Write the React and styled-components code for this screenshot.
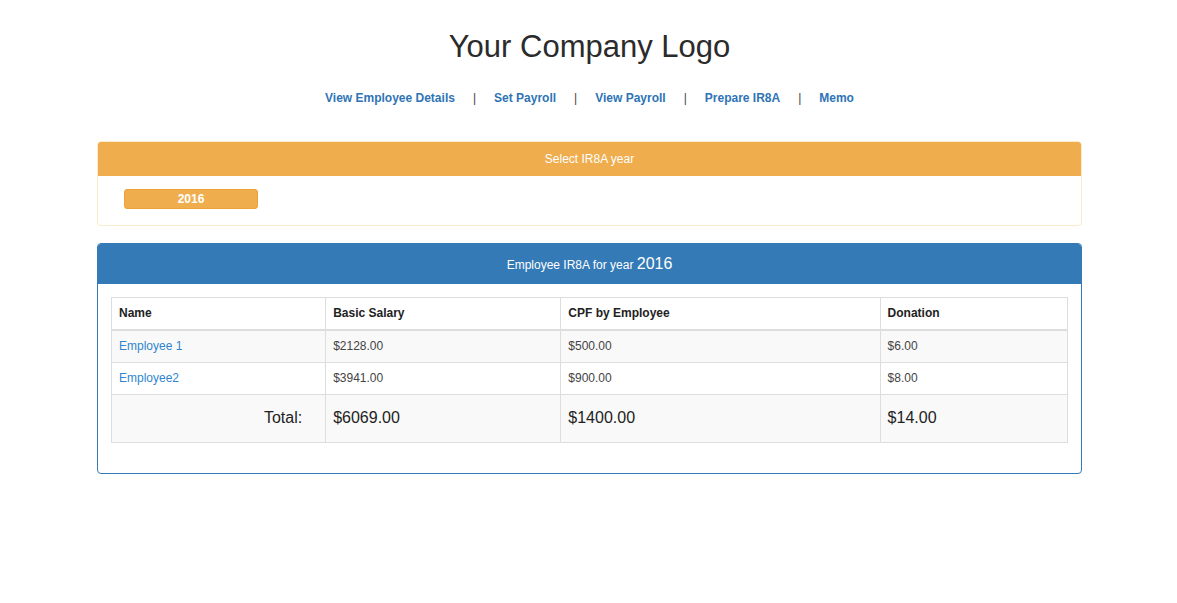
import React from "react";
import styled, { createGlobalStyle } from "styled-components";

const GlobalStyle = createGlobalStyle`
  *, *::before, *::after { box-sizing: border-box; }
  body {
    margin: 0;
    background: #fff;
    color: #333;
    font-family: "Liberation Sans", Arial, sans-serif;
    font-size: 12px;
    line-height: 17px;
  }
`;

const Container = styled.div`
  padding: 27px 95px 24px 97px;
`;

const Title = styled.h1`
  margin: 0;
  font-size: 31px;
  font-weight: 400;
  line-height: 40px;
  text-align: center;
  color: #2b2b2b;
`;

const Nav = styled.nav`
  display: flex;
  justify-content: center;
  gap: 18px;
  margin: 23px 0 34px;
  font-weight: 700;
`;

const NavLink = styled.a`
  color: #2e74b5;
  text-decoration: none;
`;

const Separator = styled.span`
  font-weight: 400;
  color: #444;
`;

const Panel = styled.section`
  margin-bottom: 17px;
  border: 1px solid ${(p) => p.$border};
  border-radius: 4px;
  overflow: hidden;
`;

const PanelHeading = styled.h2`
  margin: 0;
  padding: ${(p) => p.$pad};
  background: ${(p) => p.$fill};
  color: #fff;
  font-size: 12px;
  font-weight: 400;
  line-height: 17px;
  text-align: center;
`;

const Year = styled.span`
  font-size: 16px;
  line-height: 22px;
`;

const YearBody = styled.div`
  padding: 13px 26px 16px;
`;

const YearButton = styled.button`
  display: block;
  width: 134px;
  height: 20px;
  padding: 0;
  border: 1px solid #eea236;
  border-radius: 3px;
  background: #f0ad4e;
  color: #fff;
  font: 700 12px/17px "Liberation Sans", Arial, sans-serif;
  cursor: pointer;
`;

const TableBody = styled.div`
  padding: 13px 13px 30px;
`;

const Table = styled.table`
  width: 100%;
  table-layout: fixed;
  border-collapse: collapse;
  border: 1px solid #ddd;

  tbody tr:nth-child(odd) { background: #f9f9f9; }
`;

const Col = styled.col`
  width: ${(p) => p.$width};
`;

const HeadCell = styled.th`
  padding: 7px;
  border: 1px solid #ddd;
  border-bottom-width: 2px;
  color: #222;
  text-align: left;
`;

const Cell = styled.td`
  padding: 7px;
  border: 1px solid #ddd;
  color: #444;
`;

const TotalCell = styled(Cell)`
  padding: ${(p) => (p.$label ? "13px 23px 14px 7px" : "13px 7px 14px")};
  color: #222;
  font-size: 16px;
  line-height: 20px;
  text-align: ${(p) => (p.$label ? "right" : "left")};
`;

const EmployeeLink = styled.a`
  color: #2f86cf;
  text-decoration: none;
`;

const links = ["View Employee Details", "Set Payroll", "View Payroll", "Prepare IR8A", "Memo"];
const columns = [
  ["Name", "22.4%"],
  ["Basic Salary", "24.6%"],
  ["CPF by Employee", "33.4%"],
  ["Donation", "19.6%"],
];
const employees = [
  ["Employee 1", "$2128.00", "$500.00", "$6.00"],
  ["Employee2", "$3941.00", "$900.00", "$8.00"],
];
const totals = ["$6069.00", "$1400.00", "$14.00"];

export default function App() {
  return (
    <>
      <GlobalStyle />
      <Container>
        <Title>Your Company Logo</Title>
        <Nav>
          {links.map((label, i) => (
            <React.Fragment key={label}>
              {i > 0 && <Separator>|</Separator>}
              <NavLink href="#">{label}</NavLink>
            </React.Fragment>
          ))}
        </Nav>

        <Panel $border="#faebcc">
          <PanelHeading $fill="#f0ad4e" $pad="9px 13px 8px">Select IR8A year</PanelHeading>
          <YearBody>
            <YearButton type="button">2016</YearButton>
          </YearBody>
        </Panel>

        <Panel $border="#337ab7">
          <PanelHeading $fill="#337ab7" $pad="9px 13px">
            Employee IR8A for year <Year>2016</Year>
          </PanelHeading>
          <TableBody>
            <Table>
              <colgroup>
                {columns.map(([name, width]) => <Col key={name} $width={width} />)}
              </colgroup>
              <thead>
                <tr>
                  {columns.map(([name]) => <HeadCell key={name} scope="col">{name}</HeadCell>)}
                </tr>
              </thead>
              <tbody>
                {employees.map(([name, ...amounts]) => (
                  <tr key={name}>
                    <Cell><EmployeeLink href="#">{name}</EmployeeLink></Cell>
                    {amounts.map((amount) => <Cell key={amount}>{amount}</Cell>)}
                  </tr>
                ))}
                <tr>
                  <TotalCell $label>Total:</TotalCell>
                  {totals.map((total) => <TotalCell key={total}>{total}</TotalCell>)}
                </tr>
              </tbody>
            </Table>
          </TableBody>
        </Panel>
      </Container>
    </>
  );
}
